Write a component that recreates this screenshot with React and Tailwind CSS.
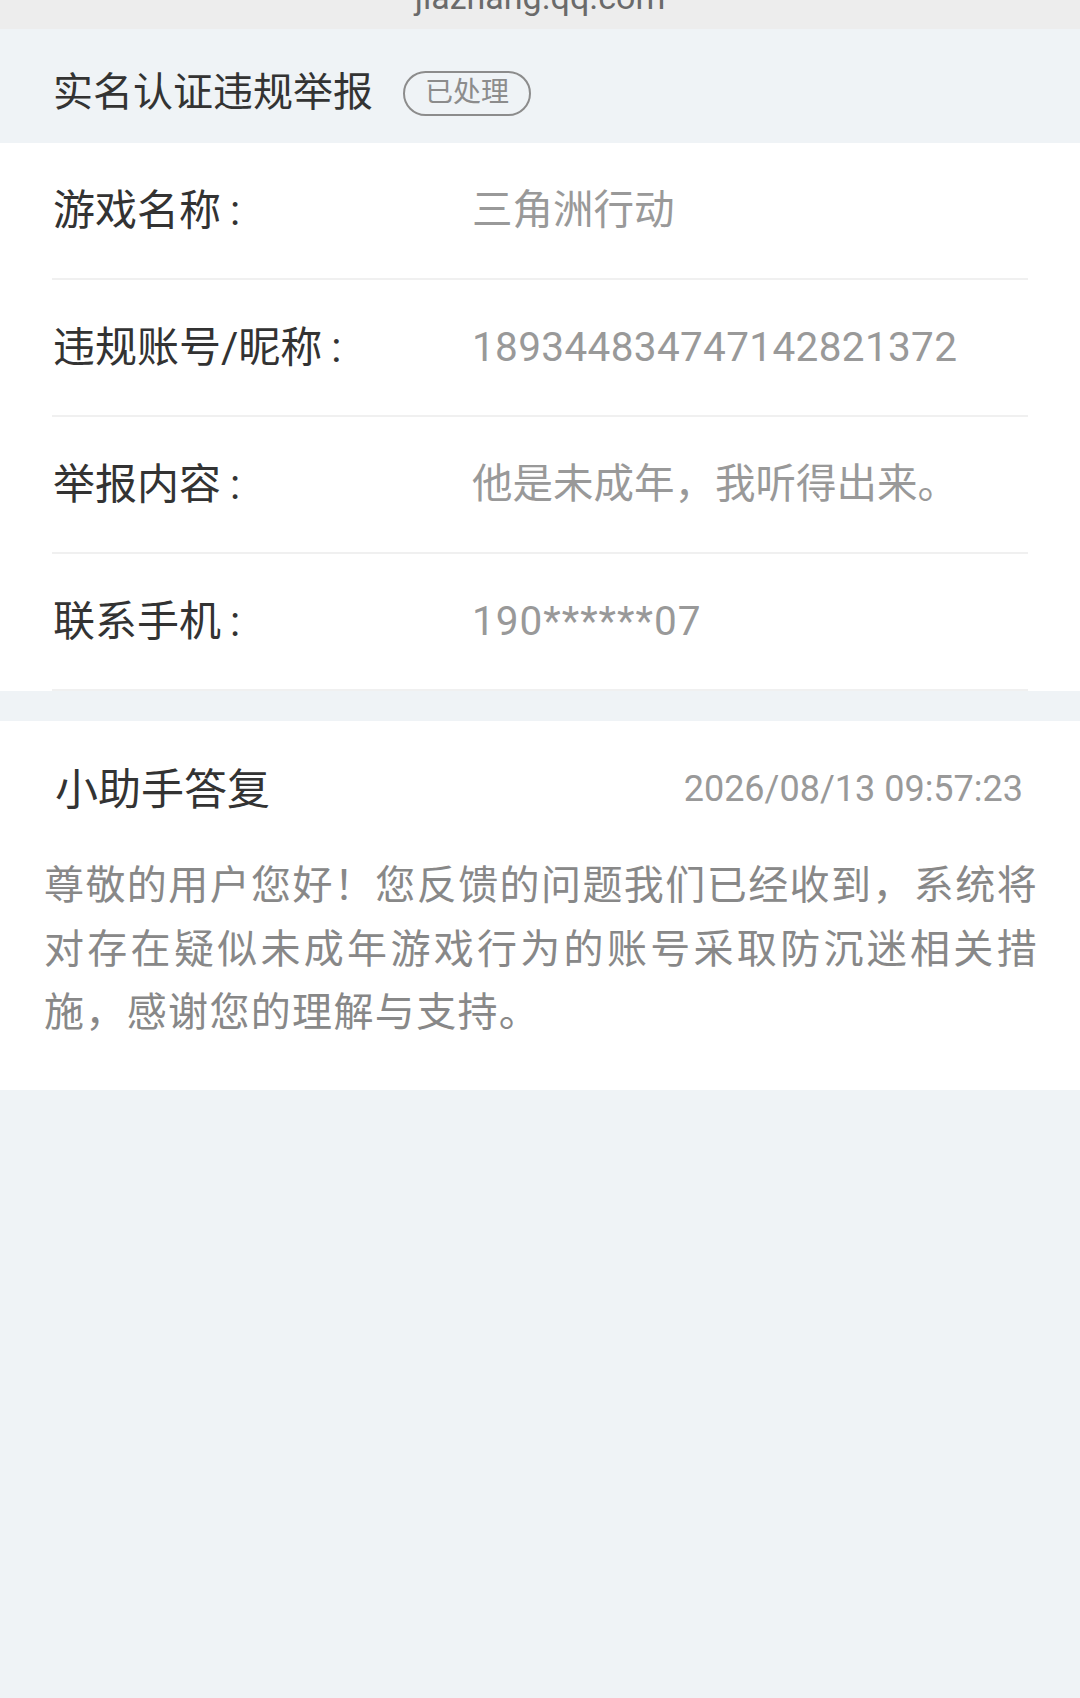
export default function App() {
  const font = {
    fontFamily: 'Roboto, "Noto Sans CJK SC", "Noto Sans", sans-serif',
  };
  const rows = [
    { label: "游戏名称", value: "三角洲行动", kind: "text" },
    { label: "违规账号/昵称", value: "189344834747142821372", kind: "num" },
    { label: "举报内容", value: "他是未成年，我听得出来。", kind: "text" },
    { label: "联系手机", value: "190******07", kind: "phone" },
  ];
  const valueClass = {
    text: "text-[40.5px] leading-none text-[#999999]",
    num: "text-[40.5px] leading-none tracking-[0.35px] text-[#999999]",
    phone: "text-[40.5px] leading-none tracking-[1px] text-[#999999]",
  };
  return (
    <div className="min-h-[1698px] bg-[#eff3f6]" style={font}>
      <div className="h-[29px] bg-[#ededed] overflow-hidden flex justify-center">
        <div className="text-[34px] leading-[34px] mt-[-20px] text-[#6a6a6a]">jiazhang.qq.com</div>
      </div>
      <div className="h-[114px] pt-[14px] pl-[53px] flex items-center">
        <span className="text-[40px] leading-none text-[#333333]">实名认证违规举报</span>
        <span className="ml-[30px] w-[128px] h-[45px] rounded-full border-2 border-[#8c8c8c] flex items-center justify-center text-[28px] leading-none text-[#8c8c8c]">
          已处理
        </span>
      </div>
      <div className="bg-white px-[52px]">
        {rows.map((r, i) => (
          <div
            key={i}
            className="h-[137px] border-b-2 border-[#f0f0f0] flex items-center pl-[1px]"
          >
            <div className="w-[419px] text-[42px] leading-none text-[#333333]">
              {r.label}
              <span className="ml-[9px]">:</span>
            </div>
            <div className={valueClass[r.kind]}>{r.value}</div>
          </div>
        ))}
      </div>
      <div className="mt-[30px] bg-white pt-[39px] pb-[45px]">
        <div className="h-[60px] pl-[55px] pr-[57px] flex items-center justify-between">
          <span className="text-[43px] leading-none text-[#333333]">小助手答复</span>
          <span className="text-[36px] leading-none text-[#999999] mt-[-3px]">2026/08/13 09:57:23</span>
        </div>
        <div className="mt-[34px] pl-[44px] pr-[42px] text-[40px] leading-[63.5px] tracking-[1.35px] text-justify text-[#888888]">
          尊敬的用户您好！您反馈的问题我们已经收到，系统将对存在疑似未成年游戏行为的账号采取防沉迷相关措施，感谢您的理解与支持。
        </div>
      </div>
    </div>
  );
}
